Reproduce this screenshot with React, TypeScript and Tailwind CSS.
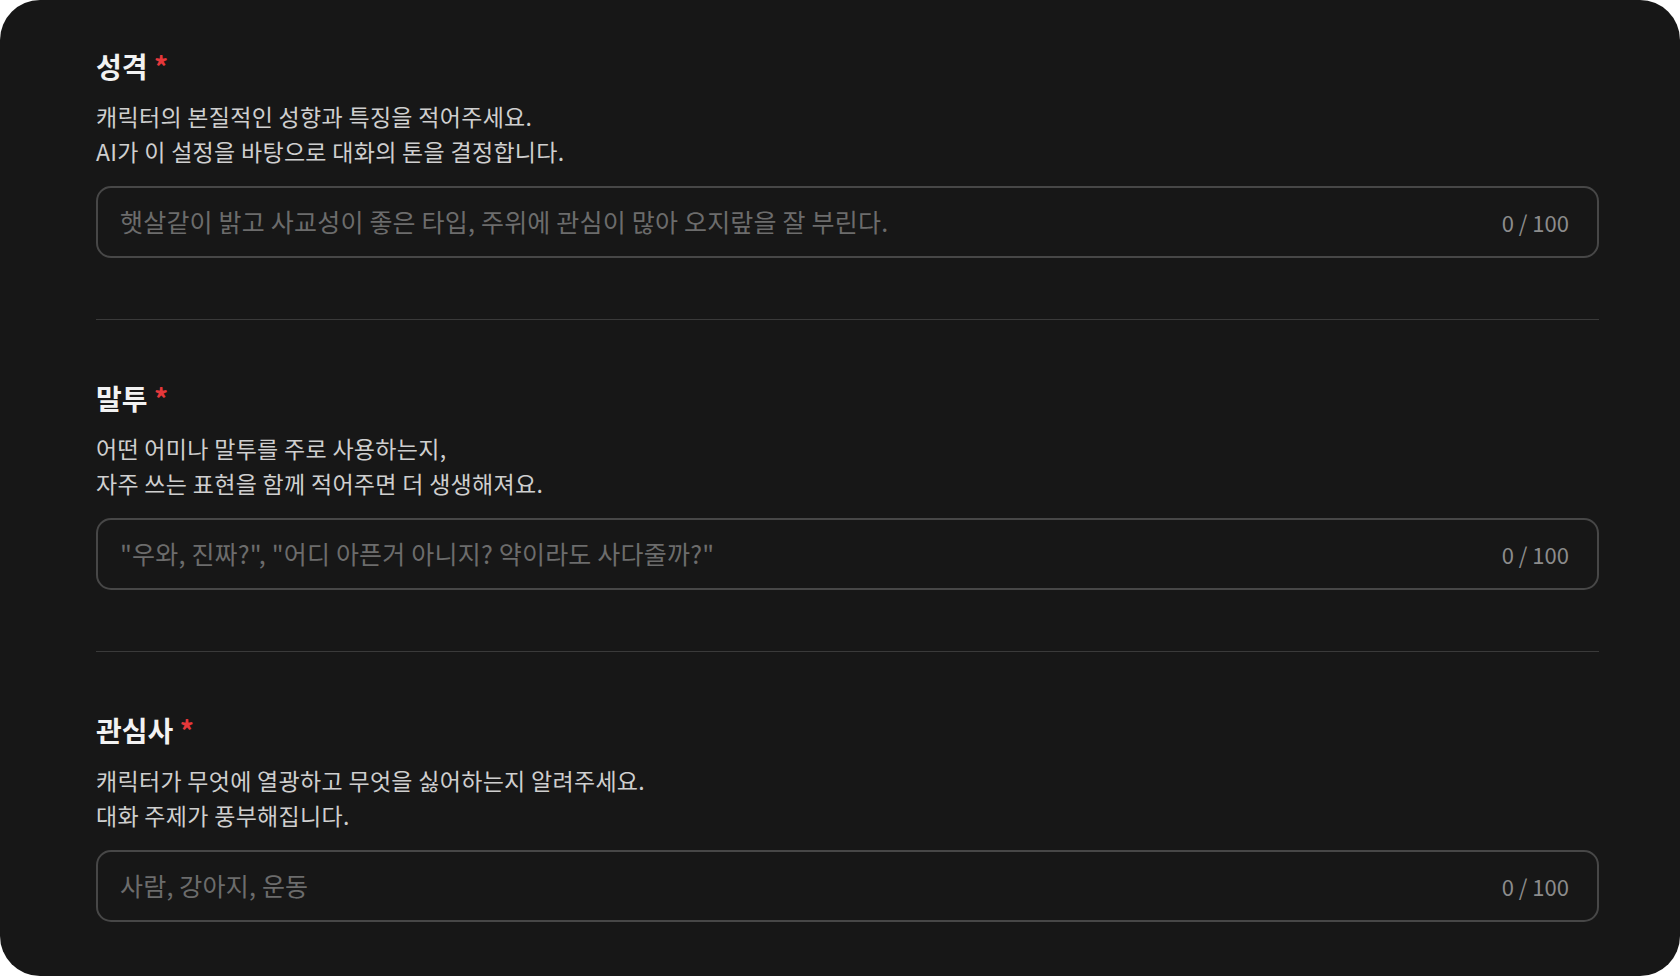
import React, { useState } from 'react';

type Field = {
  id: string;
  label: string;
  lines: string[];
  placeholder: string;
};

const FIELDS: Field[] = [
  {
    id: 'personality',
    label: '성격',
    lines: ['캐릭터의 본질적인 성향과 특징을 적어주세요.', 'AI가 이 설정을 바탕으로 대화의 톤을 결정합니다.'],
    placeholder: '햇살같이 밝고 사교성이 좋은 타입, 주위에 관심이 많아 오지랖을 잘 부린다.',
  },
  {
    id: 'tone',
    label: '말투',
    lines: ['어떤 어미나 말투를 주로 사용하는지,', '자주 쓰는 표현을 함께 적어주면 더 생생해져요.'],
    placeholder: '"우와, 진짜?", "어디 아픈거 아니지? 약이라도 사다줄까?"',
  },
  {
    id: 'interests',
    label: '관심사',
    lines: ['캐릭터가 무엇에 열광하고 무엇을 싫어하는지 알려주세요.', '대화 주제가 풍부해집니다.'],
    placeholder: '사람, 강아지, 운동',
  },
];

const MAX = 100;

const FieldBlock: React.FC<{ field: Field; value: string; onChange: (v: string) => void }> = ({ field, value, onChange }) => (
  <section>
    <h2 className="text-[28px] leading-[36px] font-bold text-[#f2f2f2]">
      {field.label} <span className="text-[#e5383b]">*</span>
    </h2>
    <div className="mt-[15px] text-[23px] leading-[35px] tracking-[0.3px] text-[#cfcfcf]">
      {field.lines.map((l) => (
        <p key={l}>{l}</p>
      ))}
    </div>
    <div className="mt-[17px] flex h-[72px] items-center rounded-[15px] border-2 border-[#474747] pl-[22px] pr-[28px]">
      <input
        value={value}
        maxLength={MAX}
        onChange={(e) => onChange(e.target.value)}
        placeholder={field.placeholder}
        className="flex-1 bg-transparent text-[25px] tracking-[0.2px] text-[#e5e5e5] outline-none placeholder:text-[#6c6c6c]"
      />
      <span className="ml-4 text-[22px] text-[#8c8c8c]">
        {value.length} / {MAX}
      </span>
    </div>
  </section>
);

const App: React.FC = () => {
  const [values, setValues] = useState<Record<string, string>>({});

  return (
    <div className="h-screen bg-white" style={{ fontFamily: '"Noto Sans CJK KR", "Noto Sans", sans-serif' }}>
      <div className="h-full overflow-hidden rounded-[40px] bg-[#171717] pl-[96px] pr-[81px] pt-[48px]">
        {FIELDS.map((f, i) => (
          <div key={f.id}>
            {i > 0 && <div className="mt-[61px] mb-[60px] h-px bg-[#3a3a3a]" />}
            <FieldBlock field={f} value={values[f.id] ?? ''} onChange={(v) => setValues((p) => ({ ...p, [f.id]: v }))} />
          </div>
        ))}
      </div>
    </div>
  );
};

export default App;
